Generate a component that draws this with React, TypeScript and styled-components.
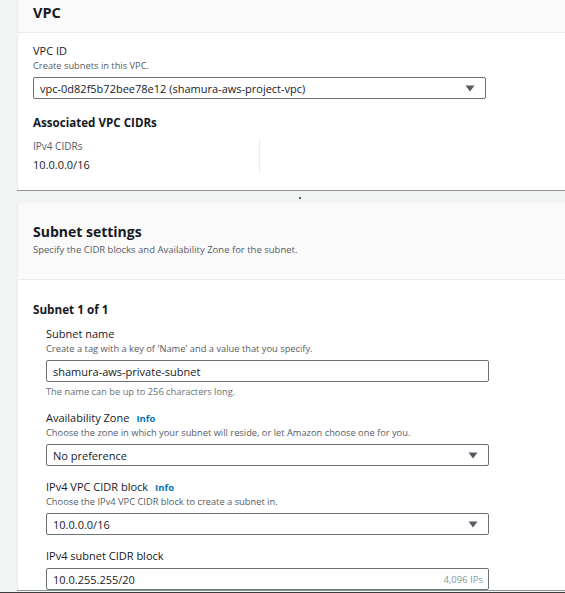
import React from "react";
import styled, { createGlobalStyle } from "styled-components";

const Global = createGlobalStyle`
  html, body { margin: 0; padding: 0; }
  body {
    background: #f2f3f3;
    font-family: "Open Sans", "Noto Sans", Arial, sans-serif;
    color: #16191f;
    overflow: hidden;
  }
`;

const Page = styled.div`
  width: 565px;
  height: 592px;
  border-bottom: 1px solid #3c3c3c;
  overflow: hidden;
  background: #f2f3f3;
  padding-left: 17px;
  box-sizing: content-box;
  display: flex;
  flex-direction: column;
`;

const Card = styled.section`
  width: 590px;
  background: #ffffff;
  border-left: 1px solid #eaeded;
  box-shadow: 0 1px 0 0 #8d9696;
  flex-shrink: 0;
`;

const CardHeader = styled.header<{ $h: number }>`
  height: ${(p) => p.$h}px;
  box-sizing: border-box;
  background: #fafafa;
  border-bottom: 1px solid #eaeded;
  padding: 0 15px;
`;

const CardTitle = styled.h2<{ $top: number; $size: number }>`
  margin: 0;
  padding-top: ${(p) => p.$top}px;
  font-size: ${(p) => p.$size}px;
  font-weight: 700;
  line-height: 18px;
  color: #16191f;
`;

const HeaderDesc = styled.p`
  margin: 3px 0 0;
  font-size: 9.5px;
  line-height: 12px;
  color: #545b64;
`;

const CardBody = styled.div<{ $pad: string }>`
  padding: ${(p) => p.$pad};
`;

const Field = styled.div<{ $gap?: number }>`
  display: flex;
  flex-direction: column;
  margin-bottom: ${(p) => p.$gap ?? 0}px;
`;

const Label = styled.div`
  height: 15px;
  font-size: 11px;
  line-height: 15px;
  color: #16191f;
  display: flex;
  align-items: baseline;
  gap: 7px;
  overflow: visible;
`;

const Info = styled.span`
  font-size: 9.5px;
  line-height: 15px;
  font-weight: 700;
  color: #0073bb;
`;

const Desc = styled.div`
  font-size: 9.3px;
  line-height: 12px;
  color: #545b64;
  margin-top: 2px;
`;

const Control = styled.div<{ $w: number }>`
  width: ${(p) => p.$w}px;
  height: 22px;
  box-sizing: border-box;
  margin-top: 5px;
  border: 1px solid #687078;
  border-radius: 2px;
  background: #fff;
  display: flex;
  align-items: center;
  justify-content: space-between;
  padding: 0 10px 0 6px;
  font-size: 11px;
  color: #16191f;
`;

const Suffix = styled.span`
  font-size: 9.5px;
  color: #879596;
  margin-right: -5px;
`;

const Constraint = styled.div`
  font-size: 9.3px;
  line-height: 12px;
  color: #687078;
  margin-top: 4px;
`;

const SubTitle = styled.h3<{ $size: number; $mt: number; $mb: number }>`
  margin: ${(p) => p.$mt}px 0 ${(p) => p.$mb}px;
  font-size: ${(p) => p.$size}px;
  font-weight: 700;
  line-height: 16px;
`;

const CidrRow = styled.div`
  display: flex;
`;

const CidrCol = styled.div`
  width: 226px;
  border-right: 1px solid #eaeded;
  padding-bottom: 2px;
`;

const CidrLabel = styled.div`
  font-size: 10px;
  line-height: 14px;
  color: #545b64;
`;

const CidrValue = styled.div`
  font-size: 11px;
  line-height: 14px;
  margin-top: 5px;
  color: #16191f;
`;

const Spacer = styled.div`
  height: 13px;
  flex-shrink: 0;
  width: 566px;
  display: flex;
  justify-content: center;
  padding-top: 7px;
  box-sizing: border-box;
`;

const Dot = styled.span`
  width: 2px;
  height: 2px;
  border-radius: 1px;
  background: #1a2a6c;
`;

const Indent = styled.div`
  padding-left: 13px;
`;

const Caret = () => (
  <svg width="10" height="7" viewBox="0 0 10 7" aria-hidden>
    <path d="M0.5 0.5 H9.5 L5 6.5 Z" fill="#545b64" />
  </svg>
);

export default function App() {
  return (
    <>
      <Global />
      <Page>
        <Card>
          <CardHeader $h={33}>
            <CardTitle $top={4} $size={14.5}>VPC</CardTitle>
          </CardHeader>
          <CardBody $pad="10px 15px 16px">
            <Field>
              <Label>VPC ID</Label>
              <Desc>Create subnets in this VPC.</Desc>
              <Control $w={453}>
                <span>vpc-0d82f5b72bee78e12 (shamura-aws-project-vpc)</span>
                <Caret />
              </Control>
            </Field>
            <SubTitle $size={11.6} $mt={16} $mb={8}>Associated VPC CIDRs</SubTitle>
            <CidrRow>
              <CidrCol>
                <CidrLabel>IPv4 CIDRs</CidrLabel>
                <CidrValue>10.0.0.0/16</CidrValue>
              </CidrCol>
            </CidrRow>
          </CardBody>
        </Card>
        <Spacer>
          <Dot />
        </Spacer>
        <Card>
          <CardHeader $h={77}>
            <CardTitle $top={20} $size={14}>Subnet settings</CardTitle>
            <HeaderDesc>Specify the CIDR blocks and Availability Zone for the subnet.</HeaderDesc>
          </CardHeader>
          <CardBody $pad="21px 15px 0">
            <SubTitle $size={11.7} $mt={0} $mb={9}>Subnet 1 of 1</SubTitle>
            <Indent>
              <Field $gap={12}>
                <Label>Subnet name</Label>
                <Desc>Create a tag with a key of 'Name' and a value that you specify.</Desc>
                <Control $w={443}>
                  <span>shamura-aws-private-subnet</span>
                </Control>
                <Constraint>The name can be up to 256 characters long.</Constraint>
              </Field>
              <Field $gap={13}>
                <Label>
                  Availability Zone <Info>Info</Info>
                </Label>
                <Desc>Choose the zone in which your subnet will reside, or let Amazon choose one for you.</Desc>
                <Control $w={443}>
                  <span>No preference</span>
                  <Caret />
                </Control>
              </Field>
              <Field $gap={13}>
                <Label>
                  IPv4 VPC CIDR block <Info>Info</Info>
                </Label>
                <Desc>Choose the IPv4 VPC CIDR block to create a subnet in.</Desc>
                <Control $w={443}>
                  <span>10.0.0.0/16</span>
                  <Caret />
                </Control>
              </Field>
              <Field>
                <Label>IPv4 subnet CIDR block</Label>
                <Control $w={443}>
                  <span>10.0.255.255/20</span>
                  <Suffix>4,096 IPs</Suffix>
                </Control>
              </Field>
            </Indent>
          </CardBody>
        </Card>
      </Page>
    </>
  );
}
